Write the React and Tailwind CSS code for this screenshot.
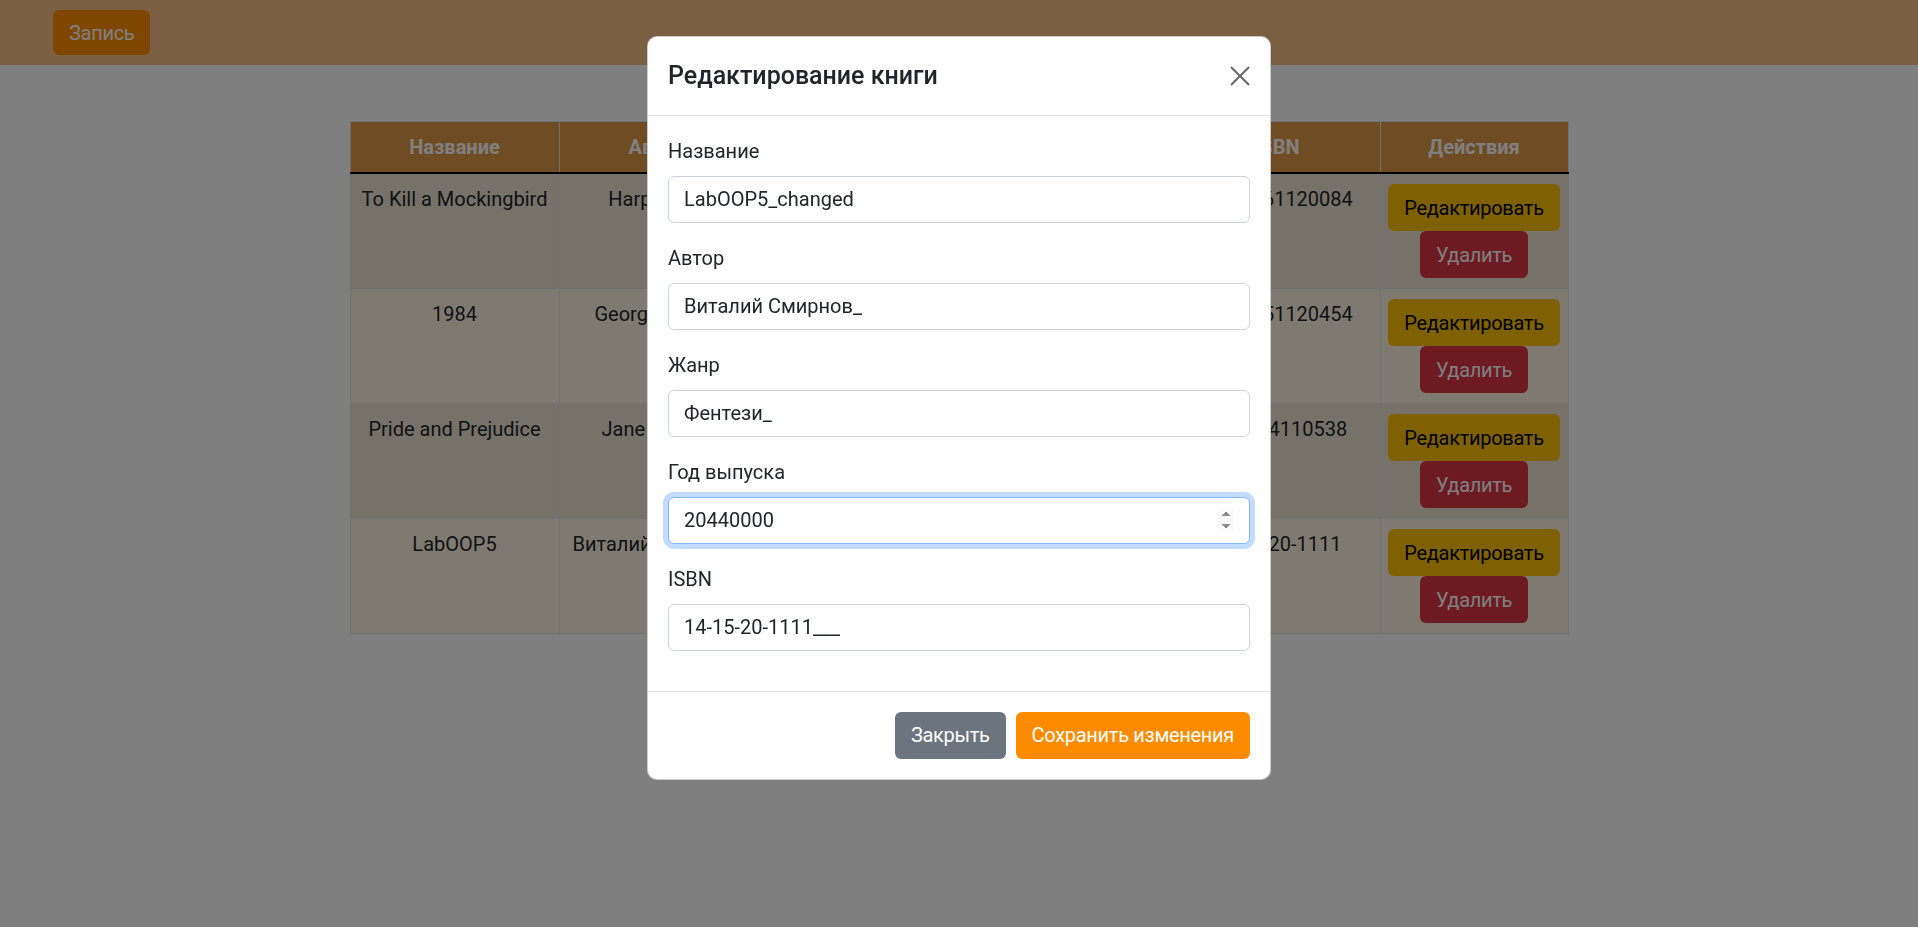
import { useState } from 'react'

const BOOKS = [
  { id: 1, title: 'To Kill a Mockingbird', author: 'Harper Lee', genre: 'Роман', year: 1960, isbn: '978-0061120084' },
  { id: 2, title: '1984', author: 'George Orwell', genre: 'Антиутопия', year: 1949, isbn: '978-0451120454' },
  { id: 3, title: 'Pride and Prejudice', author: 'Jane Austen', genre: 'Роман', year: 1813, isbn: '978-014110538' },
  { id: 4, title: 'LabOOP5', author: 'Виталий Смирнов', genre: 'Фентези', year: 2044, isbn: '14-15-20-1111' },
]

const COLUMNS = ['Название', 'Автор', 'Жанр', 'Год выпуска', 'ISBN', 'Действия']

function Field({ label, value, type = 'text', focused = false }) {
  return (
    <div className="mb-[20px]">
      <label className="mb-[10px] block text-[20px] leading-[30px]">{label}</label>
      <input
        type={type}
        defaultValue={value}
        autoFocus={focused}
        className={`block h-[47px] w-full rounded-[6px] border bg-white px-[15px] text-[20px] leading-[30px] text-[#212529] outline-none ${
          focused
            ? 'border-[#86b7fe] shadow-[0_0_0_5px_rgba(13,110,253,0.25)]'
            : 'border-[#ced4da]'
        }`}
      />
    </div>
  )
}

function EditModal() {
  return (
    <div className="fixed inset-0 z-20 flex justify-center pt-[36px]">
      <div className="h-fit w-[624px] rounded-[10px] border border-black/20 bg-white">
        <div className="flex items-center justify-between border-b border-[#dee2e6] p-[20px]">
          <h5 className="text-[25px] font-medium leading-[37.5px]">Редактирование книги</h5>
          <button type="button" className="flex h-[20px] w-[20px] items-center justify-center">
            <svg width="20" height="20" viewBox="0 0 20 20" fill="none" stroke="#000" strokeOpacity="0.6" strokeWidth="2">
              <path d="M1 1 19 19M19 1 1 19" />
            </svg>
          </button>
        </div>
        <div className="p-[20px]">
          <Field label="Название" value="LabOOP5_changed" />
          <Field label="Автор" value="Виталий Смирнов_" />
          <Field label="Жанр" value="Фентези_" />
          <Field label="Год выпуска" value="20440000" type="number" focused />
          <Field label="ISBN" value="14-15-20-1111___" />
        </div>
        <div className="flex items-center justify-end gap-[10px] border-t border-[#dee2e6] p-[20px]">
          <button type="button" className="h-[47px] rounded-[6px] bg-[#6c757d] px-[16px] text-[20px] leading-[30px] tracking-[-0.3px] text-white">
            Закрыть
          </button>
          <button type="button" className="h-[47px] rounded-[6px] bg-[#ff8c00] px-[16px] text-[20px] leading-[30px] tracking-[-0.3px] text-white">
            Сохранить изменения
          </button>
        </div>
      </div>
    </div>
  )
}

export default function App() {
  const [books] = useState(BOOKS)

  return (
    <div className="relative h-[927px] overflow-hidden bg-white font-['Roboto','Noto_Sans',sans-serif] text-[#212529]">
      <nav className="flex h-[65px] items-center bg-[#f4be86] px-[53px]">
        <button type="button" className="h-[45px] rounded-[6px] bg-[#ff8c00] px-[16px] text-[20px] leading-[30px] tracking-[-0.3px] text-white">
          Запись
        </button>
      </nav>

      <table className="mx-auto mt-[56px] w-[1218px] table-fixed border-collapse text-center text-[20px] leading-[30px]">
        <colgroup>
          <col className="w-[209px]" />
          <col className="w-[196px]" />
          <col className="w-[204px]" />
          <col className="w-[215px]" />
          <col className="w-[206px]" />
          <col className="w-[188px]" />
        </colgroup>
        <thead>
          <tr>
            {COLUMNS.map((c) => (
              <th key={c} className="border border-b-2 border-[#dee2e6] border-b-black bg-[#de9846] px-[10px] py-[10px] font-bold text-white">
                {c}
              </th>
            ))}
          </tr>
        </thead>
        <tbody>
          {books.map((b, i) => (
            <tr key={b.id} className={i % 2 === 0 ? 'bg-[#ece2d3]' : 'bg-[#fdf5e2]'}>
              <td className="border border-[#dee2e6] p-[10px] align-top">{b.title}</td>
              <td className="border border-[#dee2e6] p-[10px] align-top">{b.author}</td>
              <td className="border border-[#dee2e6] p-[10px] align-top">{b.genre}</td>
              <td className="border border-[#dee2e6] p-[10px] align-top">{b.year}</td>
              <td className="border border-[#dee2e6] p-[10px] align-top">{b.isbn}</td>
              <td className="border border-[#dee2e6] p-[10px] align-top">
                <div className="flex flex-col items-center">
                  <button type="button" className="h-[47px] rounded-[6px] bg-[#ffc107] px-[16px] tracking-[-0.3px] text-black">
                    Редактировать
                  </button>
                  <button type="button" className="h-[47px] rounded-[6px] bg-[#dc3545] px-[16px] tracking-[-0.3px] text-white">
                    Удалить
                  </button>
                </div>
              </td>
            </tr>
          ))}
        </tbody>
      </table>

      <div className="fixed inset-0 z-10 bg-black/50" />
      <EditModal />
    </div>
  )
}
